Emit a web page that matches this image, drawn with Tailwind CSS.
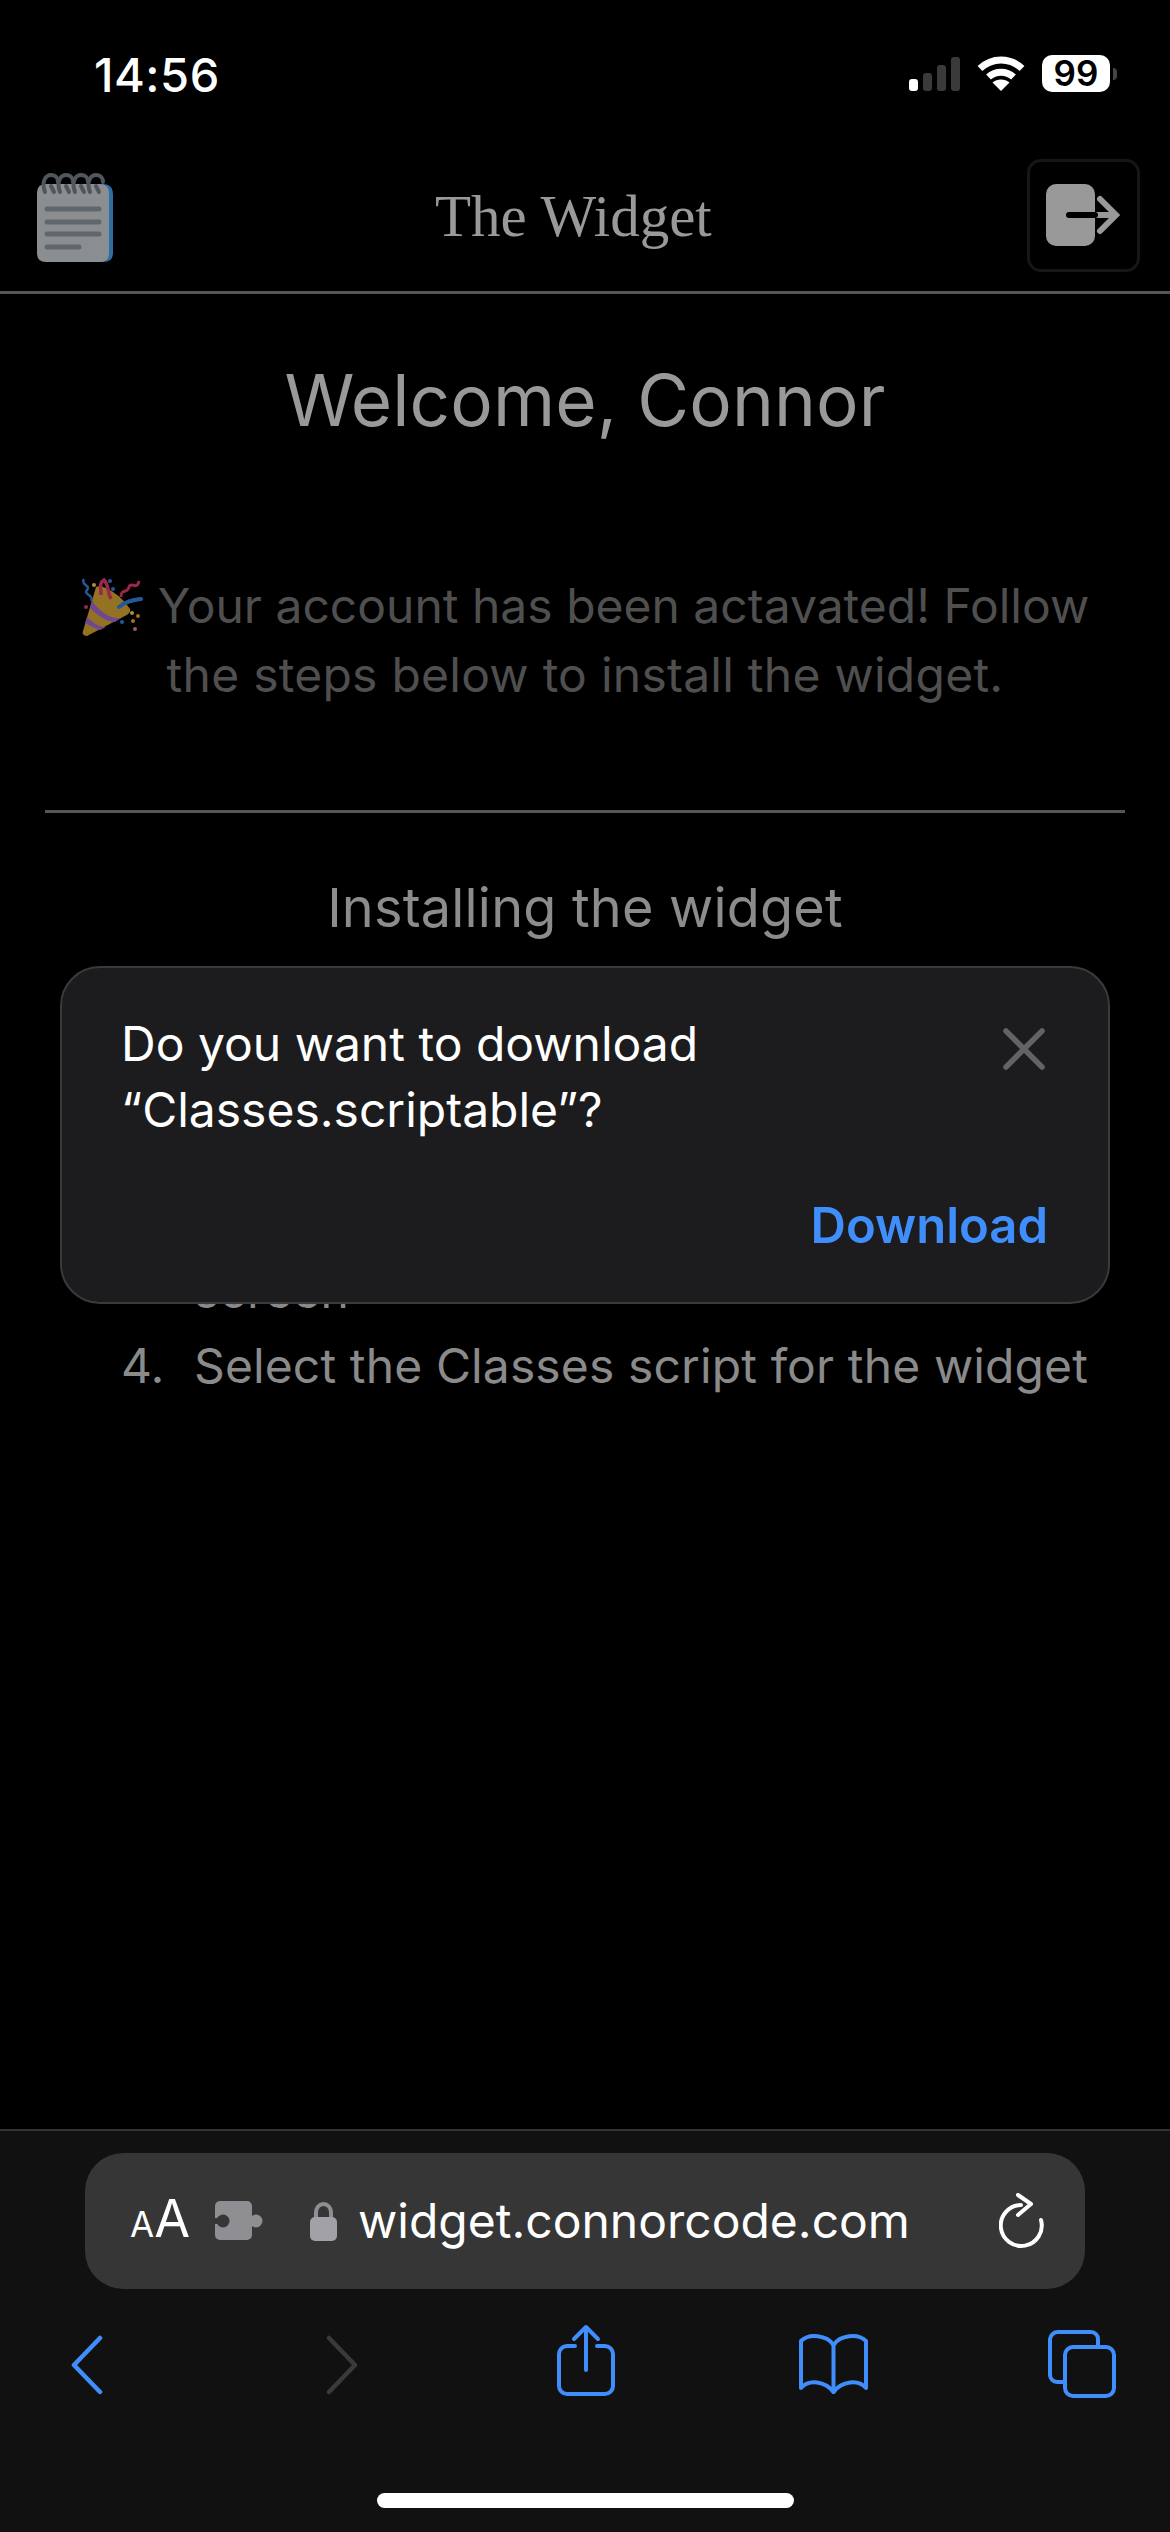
<!DOCTYPE html>
<html>
<head>
<meta charset="utf-8">
<script src="https://cdn.jsdelivr.net/npm/@tailwindcss/browser@4"></script>
</head>
<body class="bg-black">
<div class="relative w-[1170px] h-[2532px] overflow-hidden bg-black flex flex-col font-['Inter',sans-serif]">
  <!-- status bar -->
  <div class="h-[150px] shrink-0 flex items-start justify-between pl-[94px] pr-[53px] pt-[51px]">
    <span class="text-[47px] leading-[48px] font-medium text-white tracking-[0.5px]">14:56</span>
    <div class="flex items-center mt-[4px]">
      <div class="flex items-end gap-[5px] h-[34px]">
        <div class="w-[9px] h-[12px] rounded-[3px] bg-white"></div>
        <div class="w-[9px] h-[18px] rounded-[3px] bg-[#3a3a3a]"></div>
        <div class="w-[9px] h-[26px] rounded-[3px] bg-[#3a3a3a]"></div>
        <div class="w-[9px] h-[34px] rounded-[3px] bg-[#3a3a3a]"></div>
      </div>
      <svg class="ml-[17px]" width="48" height="36" viewBox="0 0 48 36" fill="none" stroke="#fff" stroke-width="7">
        <path d="M3 12.5 C15 1 33 1 45 12.5"/>
        <path d="M11.5 21 C18.500 14.500 29.500 14.500 36.500 21"/>
        <path d="M24 35 L15.500 26.500 C20 22.500 28 22.500 32.500 26.500 Z" fill="#fff" stroke="none"/>
      </svg>
      <div class="ml-[17px] w-[68px] h-[37px] rounded-[10px] bg-white flex items-center justify-center text-black text-[35px] leading-[37px] font-semibold">99</div>
      <div class="ml-[3px] w-[4px] h-[12px] rounded-r-[4px] bg-[#444]"></div>
    </div>
  </div>

  <!-- site header -->
  <div class="h-[144px] shrink-0 relative flex items-center justify-between border-b-[3px] border-[#555] pl-[37px] pr-[30px]">
    <svg class="mt-[-6px]" width="76" height="90" viewBox="0 0 76 90">
      <path d="M8 11 H66 Q76 11 76 22 V80 Q76 89 66 89 H40 Z" fill="#2f6ea5"/>
      <path d="M0 20 Q0 11 9 11 H62 Q72 11 72 20 V80 Q72 89 63 89 H9 Q0 89 0 80 Z" fill="#8b8e91"/>
      <g fill="none" stroke="#50575c" stroke-width="4" stroke-linecap="round">
        <path d="M8 19 C4 8 9 2 14 2 C19 2 21 6 21 9 M14 13 L17 19"/>
        <path d="M23 19 C19 8 24 2 29 2 C34 2 36 6 36 9 M29 13 L32 19"/>
        <path d="M38 19 C34 8 39 2 44 2 C49 2 51 6 51 9 M44 13 L47 19"/>
        <path d="M53 19 C49 8 54 2 59 2 C64 2 66 6 66 9 M59 13 L62 19"/>
      </g>
      <g stroke="#5f676c" stroke-width="5" stroke-linecap="round">
        <line x1="10" y1="36" x2="62" y2="36"/>
        <line x1="10" y1="49" x2="62" y2="49"/>
        <line x1="10" y1="61" x2="62" y2="61"/>
        <line x1="10" y1="74" x2="42" y2="74"/>
      </g>
    </svg>
    <span class="absolute left-[435px] top-[34px] font-['Liberation_Serif',serif] text-[59px] leading-[64px] text-[#999]">The Widget</span>
    <div class="w-[113px] h-[113px] mt-[-10px] rounded-[14px] border-[3px] border-[#161616] flex items-center justify-center">
      <svg width="76" height="64" viewBox="0 0 76 64">
        <rect x="0" y="0" width="49" height="62" rx="10" fill="#999"/>
        <path d="M49 31 H68" stroke="#999" stroke-width="6"/>
        <path d="M54 15 L70 31 L54 47" fill="none" stroke="#999" stroke-width="6" stroke-linecap="round" stroke-linejoin="miter"/>
        <path d="M23 31 H49" stroke="#000" stroke-width="6" stroke-linecap="round"/>
      </svg>
    </div>
  </div>

  <!-- page content -->
  <h1 class="mt-[66px] text-center text-[71px] leading-[80px] font-normal tracking-[0.1px] text-[#999]">Welcome, Connor</h1>

  <p class="mt-[131px] mx-auto w-[1100px] text-center text-[48px] leading-[69px] font-normal text-[#4f4f4f]">
    <svg class="inline-block align-[-14px] mr-[15px] opacity-80" width="62" height="60" viewBox="0 0 62 60">
      <path d="M15 10 C22 6 42 20 49 32 C50 36 46 38 42 40 L6 59 C2 59 1 56 2 54 Z" fill="#b98f2c"/>
      <path d="M11 24 C20 36 30 42 40 41 L34 45 C26 45 16 38 9 31 Z" fill="#8a5bb5"/>
      <path d="M6 40 C12 46 18 50 25 50 L19 53 C14 52 8 48 4 46 Z" fill="#8a5bb5"/>
      <path d="M38 30 C45 24 53 23 60 22" fill="none" stroke="#2f6fc0" stroke-width="4" stroke-linecap="round"/>
      <path d="M20 18 C20 10 18 6 23 3 C28 8 26 14 30 22" fill="none" stroke="#c2335e" stroke-width="3.500"/>
      <path d="M40 20 C40 10 46 18 48 10 C50 4 56 14 58 4" fill="none" stroke="#c2335e" stroke-width="3"/>
      <path d="M3 2 C-1 8 10 8 6 13 C2 18 14 18 10 24" fill="none" stroke="#2f6fc0" stroke-width="2.500"/>
      <circle cx="13" cy="8" r="2" fill="#d9b53a"/><circle cx="29" cy="4" r="2" fill="#2f6fc0"/><circle cx="32" cy="12" r="2" fill="#2f6fc0"/><circle cx="5" cy="30" r="2" fill="#c2335e"/>
      <circle cx="51" cy="36" r="2" fill="#d9b53a"/><circle cx="57" cy="39" r="2" fill="#d08a2c"/><circle cx="52" cy="44" r="2" fill="#d08a2c"/><circle cx="41" cy="45" r="2" fill="#2f6fc0"/><circle cx="54" cy="52" r="2" fill="#c76a94"/>
    </svg>Your account has been actavated! Follow<br><span class="tracking-[0.25px]">the steps below to install the widget.</span>
  </p>

  <div class="mt-[101px] mx-[45px] h-[3px] bg-[#555] shrink-0"></div>

  <h2 class="mt-[65px] text-center text-[54px] leading-[60px] font-normal tracking-[0.2px] text-[#8c8c8c]">Installing the widget</h2>

  <ol class="mt-[318px] pl-[121px] text-[48px] leading-[69px] font-normal tracking-[0.12px] text-[#8a8a8a]">
    <li class="pl-[73px]">screen</li>
    <li class="mt-[6px] flex"><span class="w-[73px] shrink-0">4.</span><span>Select the Classes script for the widget</span></li>
  </ol>

  <!-- download dialog -->
  <div class="absolute left-[60px] top-[966px] w-[1050px] h-[338px] rounded-[40px] border-2 border-[#3a3a3c] bg-[#1c1c1e] pl-[59px] pr-[60px] pt-[43px]">
    <div class="flex justify-between items-start">
      <p class="text-[48px] leading-[66px] text-white">Do you want to download<br>“Classes.scriptable”?</p>
      <svg class="mt-[17px] mr-[3px]" width="42" height="42" viewBox="0 0 42 42" stroke="#636366" stroke-width="5.500" stroke-linecap="round"><path d="M3 3 L39 39 M39 3 L3 39"/></svg>
    </div>
    <div class="mt-[50px] text-right text-[49px] leading-[66px] font-semibold text-[#3f8efc]">Download</div>
  </div>

  <!-- safari toolbar -->
  <div class="mt-auto h-[403px] shrink-0 relative border-t-2 border-[#333] bg-[#111]">
    <div class="mt-[22px] ml-[85px] w-[1000px] h-[136px] rounded-[38px] bg-[#363636] flex items-center pl-[45px] pr-[40px] text-white">
      <span class="w-[60px] flex items-baseline font-normal leading-[60px]"><span class="text-[35px]">A</span><span class="text-[52px]">A</span></span>
      <svg class="ml-[25px]" width="48" height="40" viewBox="0 0 48 40">
        <rect x="0" y="0" width="37" height="39" rx="5" fill="#8e8e93"/>
        <circle cx="41" cy="20" r="6.500" fill="#8e8e93"/>
        <circle cx="8" cy="20" r="6.500" fill="#363636"/>
        <rect x="0" y="17" width="5" height="6" fill="#363636"/>
      </svg>
      <svg class="ml-[47px]" width="27" height="39" viewBox="0 0 27 39">
        <path d="M6 18 V11 C6 -1 21 -1 21 11 V18" fill="none" stroke="#8e8e93" stroke-width="4"/>
        <rect x="0" y="15" width="27" height="24" rx="5" fill="#a1a1a6"/>
      </svg>
      <span class="ml-[21px] text-[48px] leading-[60px] font-normal">widget.connorcode.com</span>
      <svg class="ml-auto" width="46" height="56" viewBox="0 0 46 56" fill="none" stroke="#fff" stroke-width="4" stroke-linecap="round" stroke-linejoin="round">
        <path d="M22 12 A20.500 20.500 0 1 0 42 27"/>
        <path d="M19 2 L32 11 L19 22"/>
      </svg>
    </div>

    <div class="mt-[35px] flex items-start">
      <svg class="ml-[70px] mt-[11px]" width="33" height="60" viewBox="0 0 33 60" fill="none" stroke="#3f8efc" stroke-width="4.500" stroke-linecap="round" stroke-linejoin="round"><path d="M30 3 L4 30 L30 57"/></svg>
      <svg class="ml-[223px] mt-[11px]" width="33" height="60" viewBox="0 0 33 60" fill="none" stroke="#3a3a3a" stroke-width="4.500" stroke-linecap="round" stroke-linejoin="round"><path d="M3 3 L29 30 L3 57"/></svg>
      <svg class="ml-[197px]" width="60" height="74" viewBox="0 0 60 74" fill="none" stroke="#3f8efc" stroke-width="4" stroke-linecap="round" stroke-linejoin="round"><path d="M19 22 H11 A8 8 0 0 0 3 30 V62 A8 8 0 0 0 11 70 H49 A8 8 0 0 0 57 62 V30 A8 8 0 0 0 49 22 H41"/><path d="M30 46 V3 M18 15 L30 3 L42 15"/></svg>
      <svg class="ml-[181px] mt-[9px]" width="73" height="62" viewBox="0 0 73 62" fill="none" stroke="#3f8efc" stroke-width="4" stroke-linecap="round" stroke-linejoin="round"><path d="M36.500 12 C30 2 12 0 4 8 V55 C12 46 28 48 36.500 59 C45 48 61 46 69 55 V8 C61 0 43 2 36.500 12 Z"/><path d="M36.500 12 V59"/></svg>
      <svg class="ml-[177px] mt-[5px]" width="70" height="70" viewBox="0 0 70 70" fill="none" stroke="#3f8efc" stroke-width="4" stroke-linecap="round" stroke-linejoin="round"><path d="M17 53 H10 A7 7 0 0 1 3 46 V10 A8 8 0 0 1 11 3 H44 A7 7 0 0 1 51 10 V17"/><rect x="18" y="18" width="49" height="49" rx="8"/></svg>
    </div>

    <div class="absolute left-[377px] top-[362px] w-[417px] h-[15px] rounded-full bg-white"></div>
  </div>
</div>
</body>
</html>
